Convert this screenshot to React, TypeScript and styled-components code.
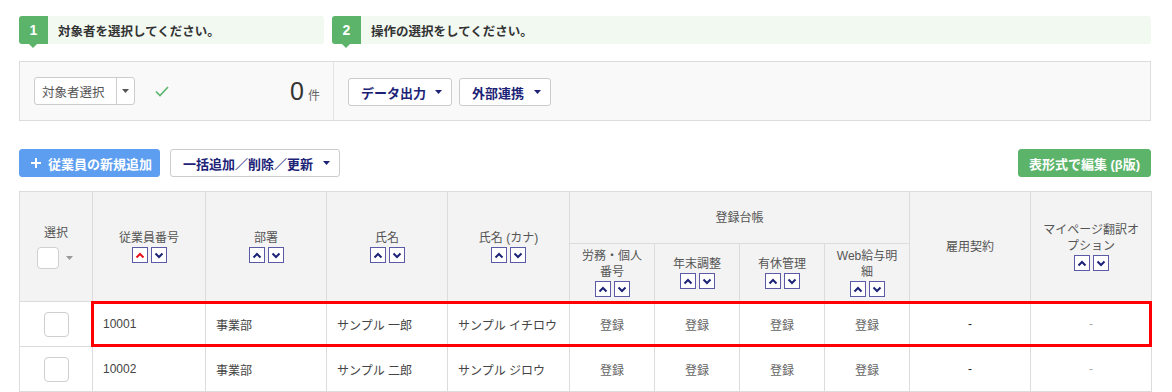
import React from "react";
import styled, { createGlobalStyle, css } from "styled-components";

const GlobalStyle = createGlobalStyle`
  html, body { margin: 0; padding: 0; background: #fff; }
  body {
    font-family: "Liberation Sans", "Noto Sans CJK JP", sans-serif;
    color: #333;
    overflow: hidden;
  }
  * { box-sizing: border-box; }
`;

const GREEN = "#5cb46b";
const NAVY = "#1c2377";

const Page = styled.div`
  width: 1172px;
  height: 392px;
  padding: 16px 21px 0 19px;
  overflow: hidden;
`;

const Steps = styled.div`
  display: flex;
  gap: 8px;
  height: 28px;
`;

const Step = styled.div<{ $width?: string }>`
  display: flex;
  align-items: center;
  background: #f1f9f1;
  border-radius: 3px;
  ${(p) => (p.$width ? css`width: ${p.$width};` : css`flex: 1;`)}
`;

const Badge = styled.div`
  position: relative;
  width: 29px;
  height: 28px;
  background: ${GREEN};
  border-radius: 3px 0 0 3px;
  color: #fff;
  font-weight: bold;
  font-size: 14px;
  display: flex;
  align-items: center;
  justify-content: center;
  &::after {
    content: "";
    position: absolute;
    left: 10px;
    bottom: -4px;
    border-left: 4px solid transparent;
    border-right: 4px solid transparent;
    border-top: 4px solid ${GREEN};
  }
`;

const StepText = styled.span`
  margin-left: 10px;
  font-size: 12.5px;
  font-weight: bold;
  color: #333;
`;

const Panel = styled.div`
  margin-top: 17px;
  height: 60px;
  border: 1px solid #dcdcdc;
  background: #f9f9f9;
  display: flex;
`;

const PanelSection = styled.div<{ $width?: string }>`
  display: flex;
  align-items: center;
  ${(p) =>
    p.$width
      ? css`
          width: ${p.$width};
          border-right: 1px solid #e4e4e4;
          padding: 0 13px 0 14px;
        `
      : css`
          flex: 1;
          padding: 2px 14px 0 14px;
          gap: 7px;
        `}
`;

const Select = styled.div`
  display: flex;
  height: 28px;
  width: 101px;
  background: #fff;
  border: 1px solid #ccc;
  border-radius: 3px;
`;

const SelectLabel = styled.div`
  flex: 1;
  display: flex;
  align-items: center;
  padding-left: 7px;
  font-size: 12.5px;
  color: #555;
  border-right: 1px solid #ccc;
`;

const SelectCaret = styled.div`
  width: 17px;
  display: flex;
  align-items: center;
  justify-content: center;
`;

const CheckMark = styled.svg`
  margin-left: 20px;
`;

const Count = styled.div`
  margin-left: auto;
  display: flex;
  align-items: baseline;
  gap: 4px;
`;

const CountNum = styled.span`
  font-size: 25px;
  color: #333;
  font-weight: 300;
`;

const CountUnit = styled.span`
  font-size: 12px;
  color: #666;
`;

const Button = styled.button<{ $variant?: "primary" | "success" | "default"; $width: number; $push?: boolean }>`
  height: 28px;
  width: ${(p) => p.$width}px;
  border-radius: 3px;
  display: flex;
  align-items: center;
  font-family: inherit;
  font-size: 13px;
  font-weight: bold;
  cursor: pointer;
  ${(p) => p.$push && css`margin-left: auto;`}
  ${(p) =>
    p.$variant === "primary"
      ? css`
          background: #5d9ef1;
          border: 1px solid #5d9ef1;
          color: #fff;
          padding: 0 0 0 11px;
          gap: 7px;
        `
      : p.$variant === "success"
      ? css`
          background: ${GREEN};
          border: 1px solid ${GREEN};
          color: #fff;
          justify-content: center;
          padding: 0;
        `
      : css`
          background: #fff;
          border: 1px solid #ccc;
          color: ${NAVY};
          padding: 0 9px 0 12px;
          justify-content: space-between;
        `}
`;

const Toolbar = styled.div`
  margin-top: 28px;
  display: flex;
  gap: 10px;
`;

const TableWrap = styled.div`
  position: relative;
  margin-top: 14px;
`;

const Table = styled.table`
  width: 1132px;
  border-collapse: collapse;
  table-layout: fixed;
  border: 1px solid #dcdcdc;
`;

const Th = styled.th<{ $h?: number }>`
  background: #f3f3f3;
  color: #555;
  font-size: 12px;
  font-weight: normal;
  text-align: center;
  vertical-align: middle;
  border: 1px solid #dcdcdc;
  padding: 0 6px;
  line-height: 16px;
  ${(p) => p.$h && css`height: ${p.$h}px;`}
`;

const Td = styled.td<{ $align?: "left" | "center"; $tone?: "muted" | "soft" | "strong" }>`
  height: 45px;
  border: 1px solid #dcdcdc;
  font-size: 12px;
  color: ${(p) =>
    p.$tone === "muted" ? "#aaa" : p.$tone === "soft" ? "#666" : p.$tone === "strong" ? "#222" : "#444"};
  text-align: ${(p) => p.$align ?? "left"};
  padding: 0 10px;
  vertical-align: middle;
  background: #fff;
`;

const SortGroup = styled.div`
  display: flex;
  justify-content: center;
  gap: 3px;
  margin-top: 1px;
`;

const SortBtn = styled.span`
  width: 16px;
  height: 16px;
  border: 1px solid #5a5aa6;
  background: #fff;
  display: flex;
  align-items: center;
  justify-content: center;
`;

const HeadCheckRow = styled.div`
  display: flex;
  align-items: center;
  justify-content: center;
  gap: 7px;
  margin-top: 6px;
  padding-right: 2px;
`;

const CheckBox = styled.span<{ $size: number }>`
  display: inline-block;
  width: ${(p) => p.$size}px;
  height: ${(p) => p.$size}px;
  border: 1px solid #cfcfcf;
  border-radius: 4px;
  background: #fff;
  vertical-align: middle;
`;

const Highlight = styled.div`
  position: absolute;
  left: 72px;
  top: 110px;
  width: 1061px;
  height: 46px;
  border: 3px solid #ff0000;
  pointer-events: none;
`;

const Caret = ({ color = "#333", w = 7 }: { color?: string; w?: number }) => (
  <svg width={w} height={4} viewBox="0 0 7 4">
    <polygon points="0,0 7,0 3.5,4" fill={color} />
  </svg>
);

const Chevron = ({ dir, color }: { dir: "up" | "down"; color: string }) => (
  <svg width={10} height={7} viewBox="0 0 10 7">
    <polyline
      points={dir === "up" ? "1.5,5.5 5,2 8.5,5.5" : "1.5,1.5 5,5 8.5,1.5"}
      fill="none"
      stroke={color}
      strokeWidth={2}
    />
  </svg>
);

const Sort = ({ activeUp }: { activeUp?: boolean }) => (
  <SortGroup>
    <SortBtn>
      <Chevron dir="up" color={activeUp ? "#e8101a" : NAVY} />
    </SortBtn>
    <SortBtn>
      <Chevron dir="down" color={NAVY} />
    </SortBtn>
  </SortGroup>
);

const widths = [73, 113, 121, 121, 122, 85, 85, 85, 85, 121, 121];

const rows = [
  { no: "10001", dept: "事業部", name: "サンプル 一郎", kana: "サンプル イチロウ" },
  { no: "10002", dept: "事業部", name: "サンプル 二郎", kana: "サンプル ジロウ" },
];

export default function App() {
  return (
    <>
      <GlobalStyle />
      <Page>
        <Steps>
          <Step $width="305px">
            <Badge>1</Badge>
            <StepText>対象者を選択してください。</StepText>
          </Step>
          <Step>
            <Badge>2</Badge>
            <StepText>操作の選択をしてください。</StepText>
          </Step>
        </Steps>

        <Panel>
          <PanelSection $width="314px">
            <Select>
              <SelectLabel>対象者選択</SelectLabel>
              <SelectCaret>
                <Caret color="#555" />
              </SelectCaret>
            </Select>
            <CheckMark width={14} height={11} viewBox="0 0 14 11">
              <polyline points="1,5.5 5,9.5 13,1" fill="none" stroke={GREEN} strokeWidth={1.6} />
            </CheckMark>
            <Count>
              <CountNum>0</CountNum>
              <CountUnit>件</CountUnit>
            </Count>
          </PanelSection>
          <PanelSection>
            <Button $width={104}>
              <span>データ出力</span>
              <Caret color={NAVY} />
            </Button>
            <Button $width={92}>
              <span>外部連携</span>
              <Caret color={NAVY} />
            </Button>
          </PanelSection>
        </Panel>

        <Toolbar>
          <Button $variant="primary" $width={141}>
            <svg width={10} height={10} viewBox="0 0 10 10">
              <path d="M5 0v10M0 5h10" stroke="#fff" strokeWidth={2} />
            </svg>
            <span>従業員の新規追加</span>
          </Button>
          <Button $width={170}>
            <span>一括追加／削除／更新</span>
            <Caret color={NAVY} />
          </Button>
          <Button $variant="success" $width={133} $push>
            表形式で編集 (β版)
          </Button>
        </Toolbar>

        <TableWrap>
          <Table>
            <colgroup>
              {widths.map((w, i) => (
                <col key={i} style={{ width: w }} />
              ))}
            </colgroup>
            <thead>
              <tr>
                <Th rowSpan={2}>
                  <div>選択</div>
                  <HeadCheckRow>
                    <CheckBox $size={22} />
                    <Caret color="#999" />
                  </HeadCheckRow>
                </Th>
                <Th rowSpan={2}>
                  <div>従業員番号</div>
                  <Sort activeUp />
                </Th>
                <Th rowSpan={2}>
                  <div>部署</div>
                  <Sort />
                </Th>
                <Th rowSpan={2}>
                  <div>氏名</div>
                  <Sort />
                </Th>
                <Th rowSpan={2}>
                  <div>氏名 (カナ)</div>
                  <Sort />
                </Th>
                <Th colSpan={4} $h={52}>
                  登録台帳
                </Th>
                <Th rowSpan={2}>雇用契約</Th>
                <Th rowSpan={2}>
                  <div>マイページ翻訳オ</div>
                  <div>プション</div>
                  <Sort />
                </Th>
              </tr>
              <tr>
                <Th $h={58}>
                  <div>労務・個人</div>
                  <div>番号</div>
                  <Sort />
                </Th>
                <Th $h={58}>
                  <div>年末調整</div>
                  <Sort />
                </Th>
                <Th $h={58}>
                  <div>有休管理</div>
                  <Sort />
                </Th>
                <Th $h={58}>
                  <div>Web給与明</div>
                  <div>細</div>
                  <Sort />
                </Th>
              </tr>
            </thead>
            <tbody>
              {rows.map((r) => (
                <tr key={r.no}>
                  <Td $align="center">
                    <CheckBox $size={25} />
                  </Td>
                  <Td>{r.no}</Td>
                  <Td>{r.dept}</Td>
                  <Td>{r.name}</Td>
                  <Td>{r.kana}</Td>
                  <Td $align="center" $tone="soft">登録</Td>
                  <Td $align="center" $tone="soft">登録</Td>
                  <Td $align="center" $tone="soft">登録</Td>
                  <Td $align="center" $tone="soft">登録</Td>
                  <Td $align="center" $tone="strong">
                    -
                  </Td>
                  <Td $align="center" $tone="muted">
                    -
                  </Td>
                </tr>
              ))}
            </tbody>
          </Table>
          <Highlight />
        </TableWrap>
      </Page>
    </>
  );
}
